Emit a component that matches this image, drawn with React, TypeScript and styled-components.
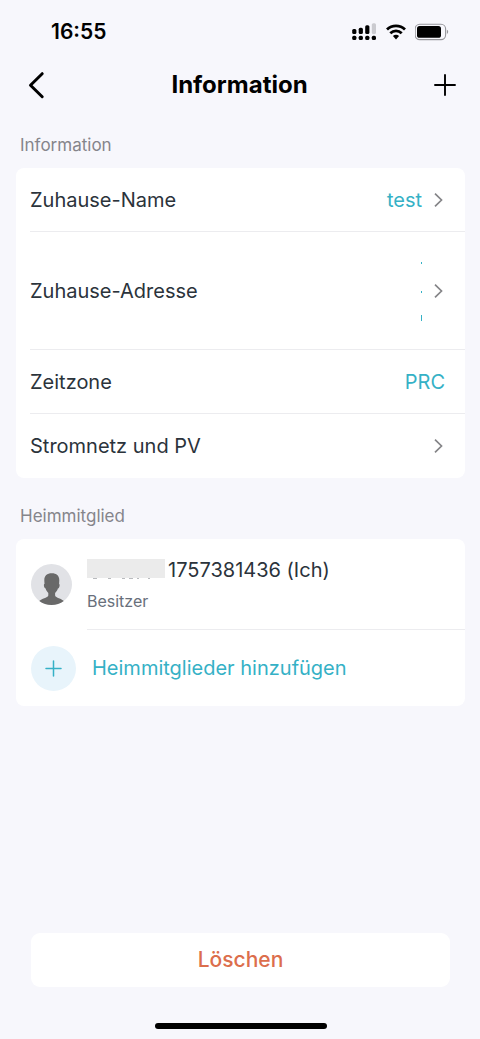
import React from "react";
import styled, { createGlobalStyle } from "styled-components";

const GlobalStyle = createGlobalStyle`
  *, *::before, *::after { box-sizing: border-box; }
  body {
    margin: 0;
    background: #f7f7fc;
    color: #2b333b;
    font-family: Inter, "Liberation Sans", sans-serif;
    font-size: 20px;
    line-height: 24px;
  }
  button { font: inherit; color: inherit; border: 0; background: none; padding: 0; cursor: pointer; }
  svg { display: block; flex: none; }
`;

const Page = styled.div`
  min-height: 100vh;
  display: flex;
  flex-direction: column;
`;

const StatusBar = styled.div`
  height: 60px;
  padding: 4px 31px 0 51px;
  display: flex;
  align-items: center;
  justify-content: space-between;
`;

const Clock = styled.time`
  color: #000;
  font-size: 21px;
  font-weight: 600;
`;

const StatusIcons = styled.div`
  display: flex;
  align-items: center;
  gap: 9px;
`;

const Header = styled.header`
  height: 50px;
  padding: 0 24px 0 23px;
  display: grid;
  grid-template-columns: 40px 1fr 40px;
  align-items: center;
  color: #000;
`;

const IconButton = styled.button<{ $end?: boolean }>`
  height: 40px;
  display: flex;
  align-items: center;
  justify-content: ${(p) => (p.$end ? "flex-end" : "flex-start")};
`;

const Title = styled.h1`
  margin: 0;
  font-size: 24px;
  line-height: 32px;
  font-weight: 700;
  text-align: center;
`;

const Main = styled.main`
  flex: 1;
  padding: 0 15px 0 16px;
`;

const SectionTitle = styled.h2<{ $spaced?: boolean }>`
  margin: ${(p) => (p.$spaced ? "26px" : "23px")} 0 11px 4px;
  color: #85858b;
  font-size: 17px;
  line-height: 24px;
  font-weight: 400;
`;

const Card = styled.div`
  border-radius: 8px;
  background: #fff;
  overflow: hidden;
`;

const RowBody = styled.span<{ $tall?: boolean }>`
  height: ${(p) => (p.$tall ? "118px" : "64px")};
  padding-right: 20px;
  border-bottom: 1px solid #ececef;
  display: flex;
  align-items: center;
  gap: 11px;
`;

const Row = styled.button`
  width: 100%;
  padding-left: 14px;
  display: block;
  text-align: left;
  &:last-child ${RowBody} { border-bottom-color: transparent; }
`;

const RowLabel = styled.span`
  flex: 1;
`;

const Value = styled.span`
  color: #35b1c6;
`;

const Member = styled.button`
  width: 100%;
  padding-left: 15px;
  display: flex;
  align-items: center;
  gap: 15px;
  text-align: left;
`;

const MemberBody = styled.span`
  flex: 1;
  height: 91px;
  padding-top: 19px;
  border-bottom: 1px solid #ececef;
  display: flex;
  flex-direction: column;
  gap: 7px;
`;

const MemberName = styled.span`
  display: flex;
  align-items: center;
  gap: 3px;
`;

const Role = styled.span`
  color: #686f7b;
  font-size: 16px;
  line-height: 24px;
`;

const AddMember = styled.button`
  width: 100%;
  height: 76px;
  padding-left: 15px;
  display: flex;
  align-items: center;
  gap: 16px;
  color: #35b1c6;
`;

const PlusDisc = styled.span`
  width: 45px;
  height: 45px;
  border-radius: 50%;
  background: #e8f4fb;
  display: grid;
  place-items: center;
`;

const Footer = styled.footer`
  padding: 24px 30px 10px 31px;
  display: flex;
  flex-direction: column;
  align-items: center;
  gap: 36px;
`;

const DeleteButton = styled.button`
  width: 100%;
  height: 54px;
  border-radius: 9px;
  background: #fff;
  color: #dc6e4c;
  font-size: 21px;
  font-weight: 500;
`;

const HomeBar = styled.div`
  width: 172px;
  height: 6px;
  border-radius: 3px;
  background: #000;
`;

const Chevron = () => (
  <svg width="12" height="16" viewBox="0 0 12 16" fill="none" stroke="#858588" strokeWidth="1.7" aria-hidden="true">
    <path d="M2 1.7 8.5 8 2 14.3" />
  </svg>
);

const Plus = ({ size, stroke }: { size: number; stroke: number }) => (
  <svg width={size} height={size} viewBox={`0 0 ${size} ${size}`} stroke="currentColor" strokeWidth={stroke} strokeLinecap="round" aria-hidden="true">
    <path d={`M${size / 2} 1V${size - 1}M1 ${size / 2}H${size - 1}`} />
  </svg>
);

const Signal = () => (
  <svg width="25" height="18" viewBox="0 0 25 18" aria-hidden="true">
    <rect x="0.2" y="6" width="4.2" height="5" rx="1.5" />
    <rect x="6.7" y="4.7" width="4.2" height="6.3" rx="1.5" />
    <rect x="13.2" y="2.3" width="4.2" height="8.7" rx="1.5" />
    <rect x="19.8" y="0.3" width="4.2" height="10.7" rx="1.5" fill="#cbcbd0" />
    <rect x="0.2" y="12.7" width="4.2" height="4.3" rx="1.6" />
    <rect x="6.7" y="12.7" width="4.2" height="4.3" rx="1.6" />
    <rect x="13.2" y="12.7" width="4.2" height="4.3" rx="1.6" />
    <rect x="19.8" y="12.7" width="4.2" height="4.3" rx="1.6" />
  </svg>
);

const Wifi = () => (
  <svg width="20" height="16" viewBox="0 0 20 16" fill="none" stroke="#000" strokeWidth="2.8" aria-hidden="true">
    <path d="M1 5.6C6 .7 14 .7 19 5.6" />
    <path d="M4.3 9.3C7.6 6.1 12.4 6.1 15.7 9.3" />
    <path d="M6.9 12.1C8.7 10.4 11.3 10.4 13.1 12.1L10 15.4Z" fill="#000" stroke="none" />
  </svg>
);

const Battery = () => (
  <svg width="34" height="18" viewBox="0 0 34 18" aria-hidden="true">
    <rect x="0.2" y="1.2" width="30.4" height="15.4" rx="4.6" fill="none" stroke="#96969b" strokeWidth="1.1" />
    <rect x="2" y="3" width="24" height="11.8" rx="2.6" />
    <path d="M31.9 6.8C33.6 7.5 33.6 10.3 31.9 11Z" fill="#96969b" />
  </svg>
);

const Avatar = () => (
  <svg width="41" height="41" viewBox="0 0 41 41" aria-hidden="true">
    <circle cx="20.5" cy="20.5" r="20.5" fill="#e1e2e6" />
    <path
      d="M20.8 9.3C16 9.3 13.2 12 13.3 16.4L13.5 20C12.4 20 12.8 24 14.6 24.6C15.2 26.6 16.2 28 17.3 29V31.4C16.5 34 10.5 34.3 8.3 37C15 42.2 26 42.2 32.8 37C30.5 34.3 24.9 34 24.1 31.4V29C25.3 28 26.3 26.6 26.9 24.6C28.6 24 29.1 20 28.1 20L28.3 16.4C28.4 12 25.6 9.3 20.8 9.3Z"
      fill="#696969"
    />
  </svg>
);

const HiddenName = () => (
  <svg width="78" height="24" viewBox="0 0 78 24" role="img" aria-label="Name verborgen">
    <rect y="1" width="78" height="19" fill="#ebebeb" />
    <path d="M6 20.5h4M21 20.5h3M35 20.5h3M42 20.5h4M50 20.5h2M61 20.5h2" stroke="#b9bbbe" />
  </svg>
);

const HiddenAddress = () => (
  <svg width="2" height="62" viewBox="0 0 2 62" role="img" aria-label="Adresse verborgen">
    <path d="M1.5 2v2M1.5 31v2M1.5 55v6" stroke="#35b1c6" />
  </svg>
);

export default function App() {
  return (
    <Page>
      <GlobalStyle />
      <StatusBar>
        <Clock>16:55</Clock>
        <StatusIcons>
          <Signal />
          <Wifi />
          <Battery />
        </StatusIcons>
      </StatusBar>
      <Header>
        <IconButton aria-label="Zurück">
          <svg width="26" height="28" viewBox="0 0 26 28" fill="none" stroke="currentColor" strokeWidth="3" strokeLinecap="round" strokeLinejoin="round" aria-hidden="true">
            <path d="M19.2 2.7 7.5 14.2 19.2 25.7" />
          </svg>
        </IconButton>
        <Title>Information</Title>
        <IconButton $end aria-label="Hinzufügen">
          <Plus size={22} stroke={1.9} />
        </IconButton>
      </Header>
      <Main>
        <SectionTitle>Information</SectionTitle>
        <Card>
          <Row>
            <RowBody>
              <RowLabel>Zuhause-Name</RowLabel>
              <Value>test</Value>
              <Chevron />
            </RowBody>
          </Row>
          <Row>
            <RowBody $tall>
              <RowLabel>Zuhause-Adresse</RowLabel>
              <HiddenAddress />
              <Chevron />
            </RowBody>
          </Row>
          <Row>
            <RowBody>
              <RowLabel>Zeitzone</RowLabel>
              <Value>PRC</Value>
            </RowBody>
          </Row>
          <Row>
            <RowBody>
              <RowLabel>Stromnetz und PV</RowLabel>
              <Chevron />
            </RowBody>
          </Row>
        </Card>
        <SectionTitle $spaced>Heimmitglied</SectionTitle>
        <Card>
          <Member>
            <Avatar />
            <MemberBody>
              <MemberName>
                <HiddenName />
                1757381436 (Ich)
              </MemberName>
              <Role>Besitzer</Role>
            </MemberBody>
          </Member>
          <AddMember>
            <PlusDisc>
              <Plus size={17} stroke={1.5} />
            </PlusDisc>
            Heimmitglieder hinzufügen
          </AddMember>
        </Card>
      </Main>
      <Footer>
        <DeleteButton>Löschen</DeleteButton>
        <HomeBar />
      </Footer>
    </Page>
  );
}
